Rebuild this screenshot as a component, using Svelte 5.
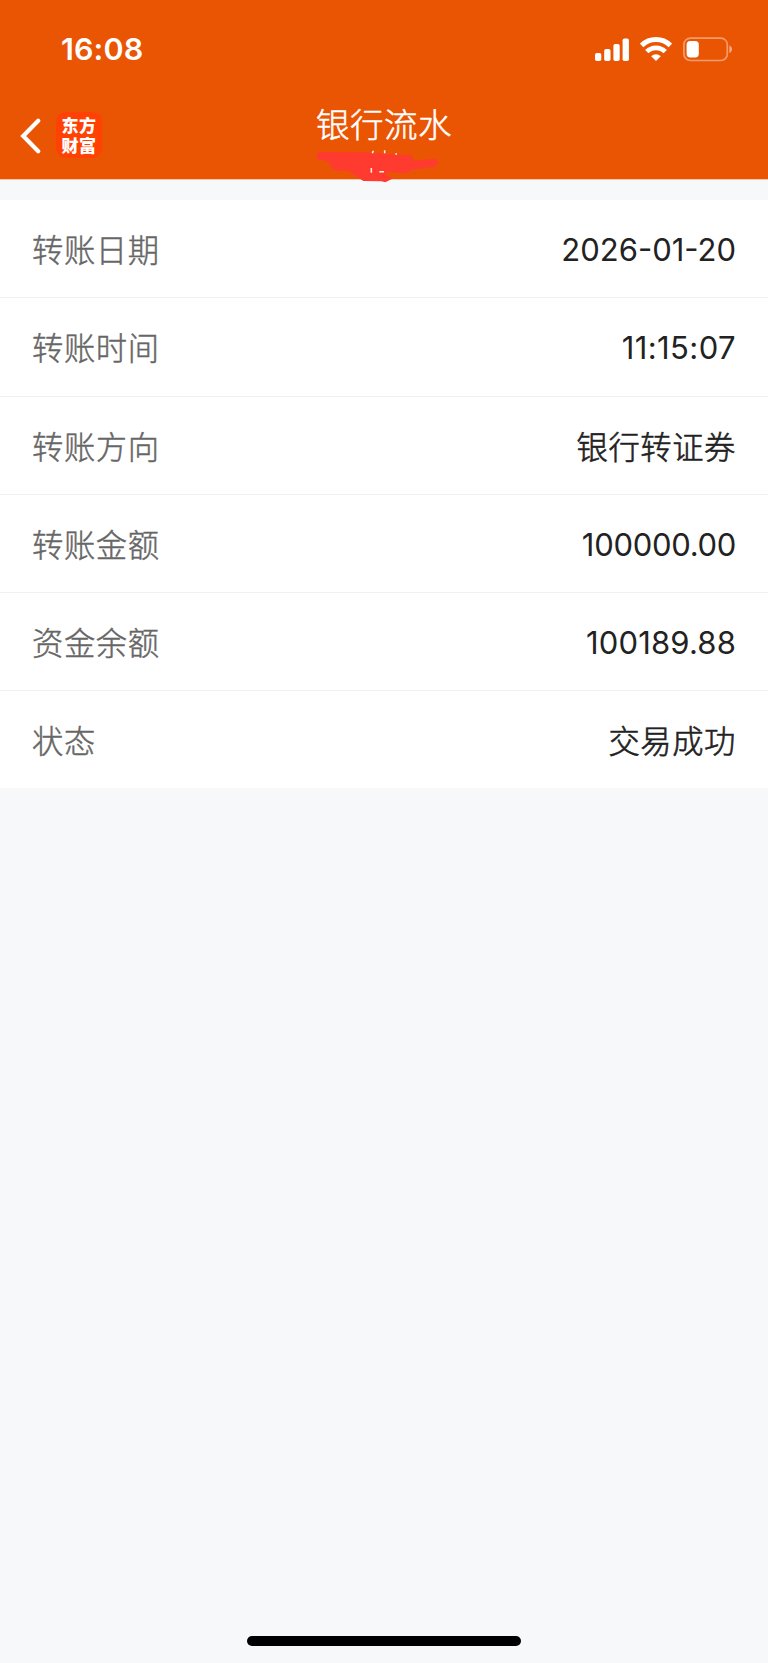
<script>
	const rows = [
		{ label: '转账日期', value: '2026-01-20', tracking: 0 },
		{ label: '转账时间', value: '11:15:07', tracking: 0.4 },
		{ label: '转账方向', value: '银行转证券' },
		{ label: '转账金额', value: '100000.00', tracking: -0.3 },
		{ label: '资金余额', value: '100189.88', tracking: 0.15 },
		{ label: '状态', value: '交易成功' }
	];
</script>

<div class="screen">
	<header>
		<div class="status-bar">
			<span class="clock">16:08</span>
			<div class="indicators">
				<svg width="34" height="23" viewBox="0 0 34 23" fill="#fff">
					<rect x="0" y="15" width="6.3" height="8" rx="1.8" />
					<rect x="9.2" y="11" width="6.3" height="12" rx="1.8" />
					<rect x="18.4" y="6" width="6.3" height="17" rx="1.8" />
					<rect x="27.6" y="0.5" width="6.3" height="22.5" rx="1.8" />
				</svg>
				<svg class="wifi" width="32" height="24" viewBox="0 0 32 24">
					<path d="M1.6 8.4a20.5 20.5 0 0 1 28.8 0" fill="none" stroke="#fff" stroke-width="4.9" />
					<path d="M6.8 14.6a13 13 0 0 1 18.4 0" fill="none" stroke="#fff" stroke-width="4.7" />
					<path d="M11.2 19.2a6.8 6.8 0 0 1 9.6 0L16 24z" fill="#fff" />
				</svg>
				<svg width="50" height="25" viewBox="0 0 50 25">
					<rect x="0.9" y="1.1" width="43.4" height="22.4" rx="6.5" fill="none" stroke="#fff" stroke-opacity="0.42" stroke-width="1.7" />
					<rect x="3.6" y="4" width="12.2" height="16.4" rx="3.6" fill="#fff" />
					<path d="M46.4 8.5c3.4 1.2 3.4 6.4 0 7.6z" fill="#fff" fill-opacity="0.5" />
				</svg>
			</div>
		</div>

		<div class="nav-bar">
			<div class="side">
				<svg class="back" width="22" height="36" viewBox="0 0 22 36">
					<path d="M18.2 2.8L3.2 18l15 15.2" fill="none" stroke="#fff" stroke-width="4.2" stroke-linecap="round" stroke-linejoin="miter" />
				</svg>
				<div class="logo">东方<br />财富</div>
			</div>
			<h1>银行流水</h1>
			<div class="side"></div>
		</div>

		<!-- account line, struck out by hand -->
		<svg class="scribble" width="124" height="35" viewBox="180 174 372 105">
			<path d="M193 186C250 187 310 186 350 188C385 191 425 194 462 196Q472 197 472 212L530 207Q546 207 546 220Q544 231 530 231L463 240Q460 250 447 250L404 247Q386 246 392 256L412 265L388 277L376 274L322 273C304 262 292 250 274 242L242 242Q222 236 224 222L206 211L190 210Q181 206 182 196Q184 187 193 186Z" fill="#ff3b30" />
			<path d="M352 182l-3 8M386 181v9M418 192h5M346 234v14M370 245h14" stroke="#fff" stroke-opacity="0.9" stroke-width="4.5" fill="none" />
		</svg>
	</header>

	<main>
		{#each rows as row}
			<div class="row">
				<span class="label">{row.label}</span>
				{#if row.tracking !== undefined}
					<span class="value numeric" style="letter-spacing:{row.tracking}px">{row.value}</span>
				{:else}
					<span class="value">{row.value}</span>
				{/if}
			</div>
		{/each}
	</main>

	<footer>
		<div class="home-indicator"></div>
	</footer>
</div>

<style>
:global(body){
	background:#f6f8fa;
}

.screen{
	width:768px;
	height:1663px;
	display:flex;
	flex-direction:column;
	background:#f6f8fa;
	font-family:Inter,"Noto Sans CJK SC",sans-serif;
	overflow:hidden;
}

header{
	position:relative;
	flex:none;
	box-sizing:border-box;
	height:180px;
	background:#ea5504;
	border-bottom:1px solid #f6c6ae;
	color:#fff;
}

.status-bar{
	height:98px;
	box-sizing:border-box;
	padding:0 35px 0 61px;
	display:flex;
	align-items:center;
	justify-content:space-between;
}

.clock{
	font-size:30.5px;
	font-weight:600;
	line-height:36px;
	letter-spacing:.1px;
}

.indicators{
	display:flex;
	align-items:center;
}

.indicators svg{
	display:block;
}

.wifi{
	margin:0 11px;
}

.nav-bar{
	display:flex;
	align-items:flex-start;
}

.side{
	flex:1;
	display:flex;
	align-items:center;
	padding:14px 0 0 20px;
}

.back{
	position:relative;
	top:1px;
	margin-right:14px;
}

.logo{
	width:46px;
	height:46px;
	box-sizing:border-box;
	padding-top:3px;
	border-radius:9px;
	background:#ff4203;
	font-family:"Noto Sans CJK SC",sans-serif;
	font-size:17px;
	font-weight:900;
	line-height:19.5px;
	letter-spacing:.4px;
	text-align:center;
}

h1{
	margin:1px 0 0;
	font-size:33.5px;
	letter-spacing:.5px;
	font-weight:300;
	line-height:48px;
	font-family:"Noto Sans CJK SC",sans-serif;
	-webkit-text-stroke:.5px #fff;
}

.scribble{
	position:absolute;
	left:316px;
	top:148px;
}

main{
	flex:none;
	margin-top:20px;
	background:#fff;
}

.row{
	height:98.3px;
	box-sizing:border-box;
	padding:0 32px;
	display:flex;
	align-items:center;
	justify-content:space-between;
	border-bottom:1px solid #eff0f2;
}

.row:last-child{
	height:97px;
	border-bottom:none;
}

.label,
.value{
	padding-top:1px;
	font-family:"Noto Sans CJK SC",sans-serif;
	font-size:31.3px;
	letter-spacing:.6px;
	font-weight:300;
	line-height:46px;
	color:#666;
	-webkit-text-stroke:.45px #666;
}

.value{
	color:#222;
	-webkit-text-stroke:.6px #222;
}

.numeric{
	padding-top:3px;
	font-family:Inter,sans-serif;
	font-size:31px;
	font-weight:400;
	-webkit-text-stroke:0;
}

footer{
	margin-top:auto;
	padding-bottom:17px;
	display:flex;
	justify-content:center;
}

.home-indicator{
	width:274px;
	height:10px;
	border-radius:5px;
	background:#000;
}
</style>
